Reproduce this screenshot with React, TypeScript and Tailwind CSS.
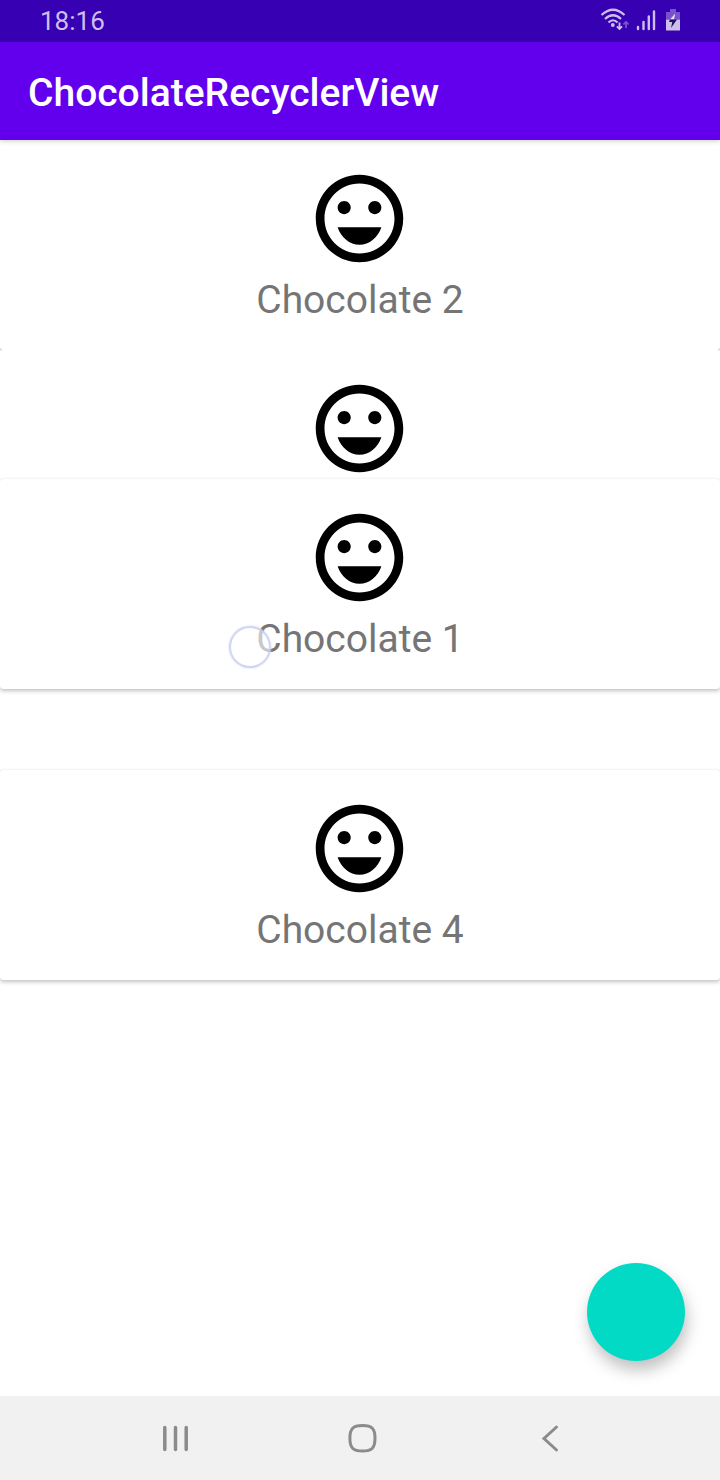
import React from "react";

function MoodIcon() {
  return (
    <svg viewBox="0 0 24 24" preserveAspectRatio="xMinYMid meet" className="h-[105px] w-[106px] fill-black" aria-hidden="true">
      <path d="M11.99 2C6.47 2 2 6.48 2 12s4.47 10 9.99 10C17.52 22 22 17.52 22 12S17.52 2 11.99 2zM12 20c-4.42 0-8-3.58-8-8s3.58-8 8-8 8 3.58 8 8-3.58 8-8 8zm3.5-9c.83 0 1.5-.67 1.5-1.5S16.33 8 15.5 8 14 8.67 14 9.5s.67 1.5 1.5 1.5zm-7 0c.83 0 1.5-.67 1.5-1.5S9.33 8 8.5 8 7 8.67 7 9.5 7.67 11 8.5 11zM12 18c2.28 0 4.22-1.66 5-4H7c.78 2.34 2.72 4 5 4z" />
    </svg>
  );
}

function Card({ title, stacked = false }: { title?: string; stacked?: boolean }) {
  const shadow = stacked
    ? "shadow-[0_1px_1px_rgba(0,0,0,0.3)]"
    : "shadow-[0_2px_4px_rgba(0,0,0,0.24),0_0_1px_rgba(0,0,0,0.14)]";
  return (
    <article className={`relative flex h-[210px] flex-col items-center rounded-[3px] bg-white pt-[26px] ${shadow}`}>
      <MoodIcon />
      {title && <h2 className="mt-[5px] text-[39px] leading-[48px] text-[#757575]">{title}</h2>}
    </article>
  );
}

function StatusBar() {
  return (
    <div className="flex h-[42px] items-center justify-between bg-[#3700b3] px-10 text-[#cdbfec]">
      <time className="text-[26px] leading-8">18:16</time>
      <svg viewBox="0 0 80 26" className="h-[26px] w-20" fill="none" aria-label="Wi-Fi, mobile signal, battery charging">
        <g stroke="currentColor" strokeWidth="2.2">
          <path d="M1.5 7Q13-3.5 24.5 7" />
          <path d="M5 11Q13 3.5 21 11" />
          <path d="M8.5 14.5Q13 10 17.5 14.5" />
        </g>
        <circle cx="12.8" cy="17" r="1.9" fill="currentColor" />
        <path d="M19.5 14.5V21M16.9 18.3L19.5 21L22.1 18.3" stroke="currentColor" strokeWidth="1.8" />
        <path d="M26 20V14M23.4 16.5L26 13.8L28.6 16.5" stroke="#7951ca" strokeWidth="1.8" />
        <g stroke="currentColor" strokeWidth="2.4" strokeLinecap="round">
          <path d="M38 19V21M43.5 14V21M48.8 8.5V21M54 3.5V21" />
        </g>
        <path d="M70 1H76V4H80V11.5H66V4H70Z" fill="#7951ca" />
        <path d="M66 11.5H80V22.5H66Z" fill="currentColor" />
        <path d="M75.2 5.5L74 11.5H70L75.2 5.5Z" fill="#e8e0fa" />
        <path d="M70 11.500H77L71 20L72.3 14H69Z" fill="#21105a" />
      </svg>
    </div>
  );
}

function NavigationBar() {
  return (
    <nav className="flex h-[84px] items-center justify-between bg-[#f1f1f1] pr-[140px] pl-[146px] text-[#8b8b8b]">
      <button type="button" aria-label="Recent apps" className="flex size-[60px] items-center justify-center">
        <svg viewBox="0 0 28 30" className="h-[30px] w-7" stroke="currentColor" strokeWidth="3.5" strokeLinecap="round">
          <path d="M2.8 4.5V26.5M13.5 4.5V26.5M24.200 4.5V26.5" />
        </svg>
      </button>
      <button type="button" aria-label="Home" className="flex size-[60px] items-center justify-center">
        <svg viewBox="0 0 30 30" className="size-[30px]" fill="none" stroke="currentColor" strokeWidth="3">
          <path d="M14.5 2.5C24 2.5 27 5.5 27 15.2S24 28 14.5 28S1.9 24.8 1.9 15.2S5 2.5 14.5 2.5Z" />
        </svg>
      </button>
      <button type="button" aria-label="Back" className="flex size-[60px] items-center justify-center">
        <svg viewBox="0 0 30 30" className="size-[30px]" fill="none" stroke="currentColor" strokeWidth="3" strokeLinecap="round">
          <path d="M21.5 4L9 15.5L21.5 27" />
        </svg>
      </button>
    </nav>
  );
}

export default function App() {
  return (
    <div className="flex min-h-screen flex-col bg-white font-['Roboto',sans-serif]">
      <StatusBar />
      <header className="relative z-10 flex h-[98px] items-center bg-[#6200ee] px-7 shadow-[0_1px_5px_rgba(0,0,0,0.2)]">
        <h1 className="pt-1 text-[39px] leading-[48px] font-medium text-white">ChocolateRecyclerView</h1>
      </header>
      <main className="relative flex-1">
        <ul>
          <li><Card title="Chocolate 2" stacked /></li>
          <li><Card stacked /></li>
          <li className="h-[210px]" />
          <li><Card title="Chocolate 4" /></li>
        </ul>
        <div className="absolute inset-x-0 top-[339px]">
          <Card title="Chocolate 1" />
          <span className="absolute top-[147px] left-[229px] size-[42px] rounded-full border-2 border-[#c5caee]/80 bg-white/60 shadow-[0_0_2px_#c5caee]" />
        </div>
        <button
          type="button"
          aria-label="Add chocolate"
          className="absolute right-[35px] bottom-[35px] size-[98px] rounded-full bg-[#03dac5] shadow-[2px_9px_16px_rgba(0,0,0,0.25)]"
        />
      </main>
      <NavigationBar />
    </div>
  );
}
